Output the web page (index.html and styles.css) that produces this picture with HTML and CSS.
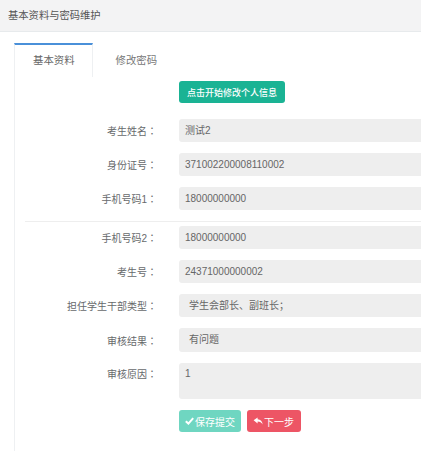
FILE: index.html
```html
<!DOCTYPE html>
<html>
<head>
<meta charset="utf-8">
<title>基本资料与密码维护</title>
<link rel="stylesheet" href="styles.css">
</head>
<body>
<div class="header">基本资料与密码维护</div>
<div class="wrap">
  <ul class="tabs">
    <li class="tab active">基本资料</li>
    <li class="tab">修改密码</li>
  </ul>
  <div class="panel">
    <div class="row top-row">
      <div class="label"></div>
      <div class="ctrl"><button class="btn btn-primary">点击开始修改个人信息</button></div>
    </div>
    <div class="row"><div class="label">考生姓名<span class="colon">：</span></div><div class="ctrl"><div class="field">测试2</div></div></div>
    <div class="row"><div class="label">身份证号<span class="colon">：</span></div><div class="ctrl"><div class="field">371002200008110002</div></div></div>
    <div class="row"><div class="label">手机号码1<span class="colon">：</span></div><div class="ctrl"><div class="field">18000000000</div></div></div>
    <div class="divider"></div>
    <div class="row"><div class="label">手机号码2<span class="colon">：</span></div><div class="ctrl"><div class="field">18000000000</div></div></div>
    <div class="row"><div class="label">考生号<span class="colon">：</span></div><div class="ctrl"><div class="field">24371000000002</div></div></div>
    <div class="row"><div class="label">担任学生干部类型<span class="colon">：</span></div><div class="ctrl"><div class="field wide-pad">学生会部长、副班长；</div></div></div>
    <div class="row"><div class="label">审核结果<span class="colon">：</span></div><div class="ctrl"><div class="field wide-pad tall1">有问题</div></div></div>
    <div class="row area-row"><div class="label">审核原因<span class="colon">：</span></div><div class="ctrl"><div class="field area">1</div></div></div>
    <div class="row btn-row">
      <div class="label"></div>
      <div class="ctrl actions">
        <button class="btn btn-save"><svg class="ico" width="9" height="8" viewBox="0 0 9 8"><path d="M0.8 4.2 L3.4 6.6 L8.2 1.2" fill="none" stroke="#fff" stroke-width="2"/></svg>保存提交</button>
        <button class="btn btn-next"><svg class="ico" width="10" height="8" viewBox="0 0 12 10"><path d="M5.5 0.5 L0.5 4.2 L5.5 8 V5.6 C8.5 5.6 10.5 6.6 11.8 9.5 C11.6 5.4 9.2 3 5.5 2.8 Z" fill="#fff"/></svg>下一步</button>
      </div>
    </div>
  </div>
</div>
</body>
</html>
```
FILE: styles.css
```css
html, body {
  margin: 0;
  padding: 0;
  overflow: hidden;
  background: #fff;
}
body {
  font-family: "Liberation Sans", "Noto Sans CJK SC", sans-serif;
  font-size: 10px;
  color: #676a6c;
  width: 421px;
  height: 452px;
}
.header {
  height: 31px;
  line-height: 31px;
  padding-left: 8px;
  background: #f3f3f4;
  border-bottom: 1px solid #e7eaec;
  color: #555;
  font-size: 10.3px;
}
.wrap {
  padding: 11px 0 0 14px;
}
.tabs {
  list-style: none;
  margin: 0;
  padding: 0;
  display: flex;
}
.tab {
  height: 32px;
  line-height: 32px;
  padding: 0 17px 0 18px;
  border-top: 2px solid transparent;
  border-left: 1px solid transparent;
  border-right: 1px solid transparent;
  color: #777;
  font-size: 10.4px;
}
.tab.active {
  border-top-color: #4a90d9;
  border-left-color: #eef0f2;
  border-right-color: #eef0f2;
  color: #666;
}
.tab + .tab {
  padding-left: 22px;
}
.panel {
  border-left: 1px solid #eef0f2;
  height: 370px;
  padding-top: 4px;
  overflow: hidden;
}
.row {
  display: flex;
  align-items: center;
  margin-bottom: 11px;
}
.top-row {
  margin-bottom: 16px;
}
.label {
  width: 142px;
  flex: none;
  text-align: right;
  color: #676a6c;
  white-space: nowrap;
}
.colon {
  font-family: "Noto Sans CJK TC", sans-serif;
}
.ctrl {
  margin-left: 22px;
  margin-right: -6px;
  flex: 1;
}
.field {
  height: 23px;
  line-height: 23px;
  background: #eeeeee;
  border-radius: 3px 0 0 3px;
  padding-left: 6px;
  color: #666;
}
.wide-pad {
  padding-left: 10px;
}
.tall1 {
  height: 24px;
  line-height: 24px;
}
.area {
  height: 36px;
  line-height: 14px;
  padding-top: 4px;
  box-sizing: border-box;
}
.area-row {
  align-items: flex-start;
  margin-top: 1px;
}
.area-row .label {
  line-height: 22px;
}
.divider {
  height: 1px;
  background: #eeeeee;
  margin: 0 0 4px 10px;
}
.btn {
  border: none;
  border-radius: 3px;
  height: 22px;
  color: #fff;
  font-family: "Liberation Sans", "Noto Sans CJK SC", sans-serif;
  font-size: 10px;
  padding: 0 8px;
  display: inline-flex;
  align-items: center;
}
.btn-primary {
  background: #1ab394;
  font-size: 9px;
  font-weight: 500;
}
.btn-row {
  margin-top: 1px;
}
.actions {
  display: flex;
  gap: 6px;
}
.btn-save {
  background: #6fd6c1;
  padding: 0 6px;
}
.btn-next {
  background: #ed5565;
  padding: 0 7px 0 6px;
}
.ico {
  margin-right: 1px;
}
```
